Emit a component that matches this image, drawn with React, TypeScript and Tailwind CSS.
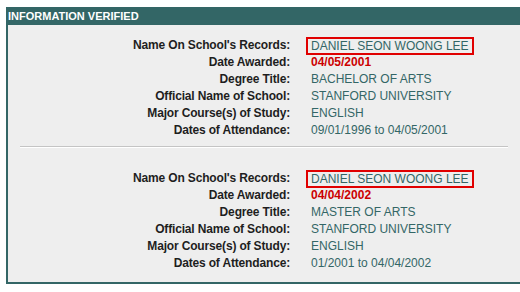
import React from "react";

type Row = { label: string; value: string; kind?: "name" | "date" };

const block1: Row[] = [
  { label: "Name On School's Records:", value: "DANIEL SEON WOONG LEE", kind: "name" },
  { label: "Date Awarded:", value: "04/05/2001", kind: "date" },
  { label: "Degree Title:", value: "BACHELOR OF ARTS" },
  { label: "Official Name of School:", value: "STANFORD UNIVERSITY" },
  { label: "Major Course(s) of Study:", value: "ENGLISH" },
  { label: "Dates of Attendance:", value: "09/01/1996 to 04/05/2001" },
];

const block2: Row[] = [
  { label: "Name On School's Records:", value: "DANIEL SEON WOONG LEE", kind: "name" },
  { label: "Date Awarded:", value: "04/04/2002", kind: "date" },
  { label: "Degree Title:", value: "MASTER OF ARTS" },
  { label: "Official Name of School:", value: "STANFORD UNIVERSITY" },
  { label: "Major Course(s) of Study:", value: "ENGLISH" },
  { label: "Dates of Attendance:", value: "01/2001 to 04/04/2002" },
];

function Block({ rows }: { rows: Row[] }) {
  return (
    <div className="flex flex-col">
      {rows.map((r, i) => (
        <div key={i} className="flex h-[17px] items-center">
          <div className="w-[282px] shrink-0 text-right text-[12px] font-bold leading-[17px] tracking-[-0.16px] text-[#1e1e1e]">
            {r.label}
          </div>
          <div className="ml-[16px] flex h-[17px] items-center">
            {r.kind === "name" ? (
              <span className="box-border flex h-[18px] items-center border-2 border-[#e00000] px-[3px] text-[12px] leading-[14px] text-[#336666]">
                {r.value}
              </span>
            ) : r.kind === "date" ? (
              <span className="pl-[5px] text-[12px] font-bold leading-[17px] text-[#cc0000]">{r.value}</span>
            ) : (
              <span className="pl-[5px] text-[12px] leading-[17px] text-[#336666]">{r.value}</span>
            )}
          </div>
        </div>
      ))}
    </div>
  );
}

export default function App() {
  return (
    <div
      className="h-[292px] w-[520px] overflow-hidden bg-white pt-[7px] pl-[6px]"
      style={{ fontFamily: '"Liberation Sans", Arial, sans-serif' }}
    >
      <div className="flex h-[18px] items-center bg-[#336666] pl-[2px] text-[11px] font-bold text-white">
        INFORMATION VERIFIED
      </div>
      <div className="border-b-2 border-l-2 border-[#336666] bg-[#eeeeee] pt-[12px] pb-[10px]">
        <Block rows={block1} />
        <div className="ml-[12px] mr-[12px] mt-[7px] mb-[22px] h-[2px] border-t border-b border-t-[#c4c4c4] border-b-white" />
        <Block rows={block2} />
      </div>
    </div>
  );
}
